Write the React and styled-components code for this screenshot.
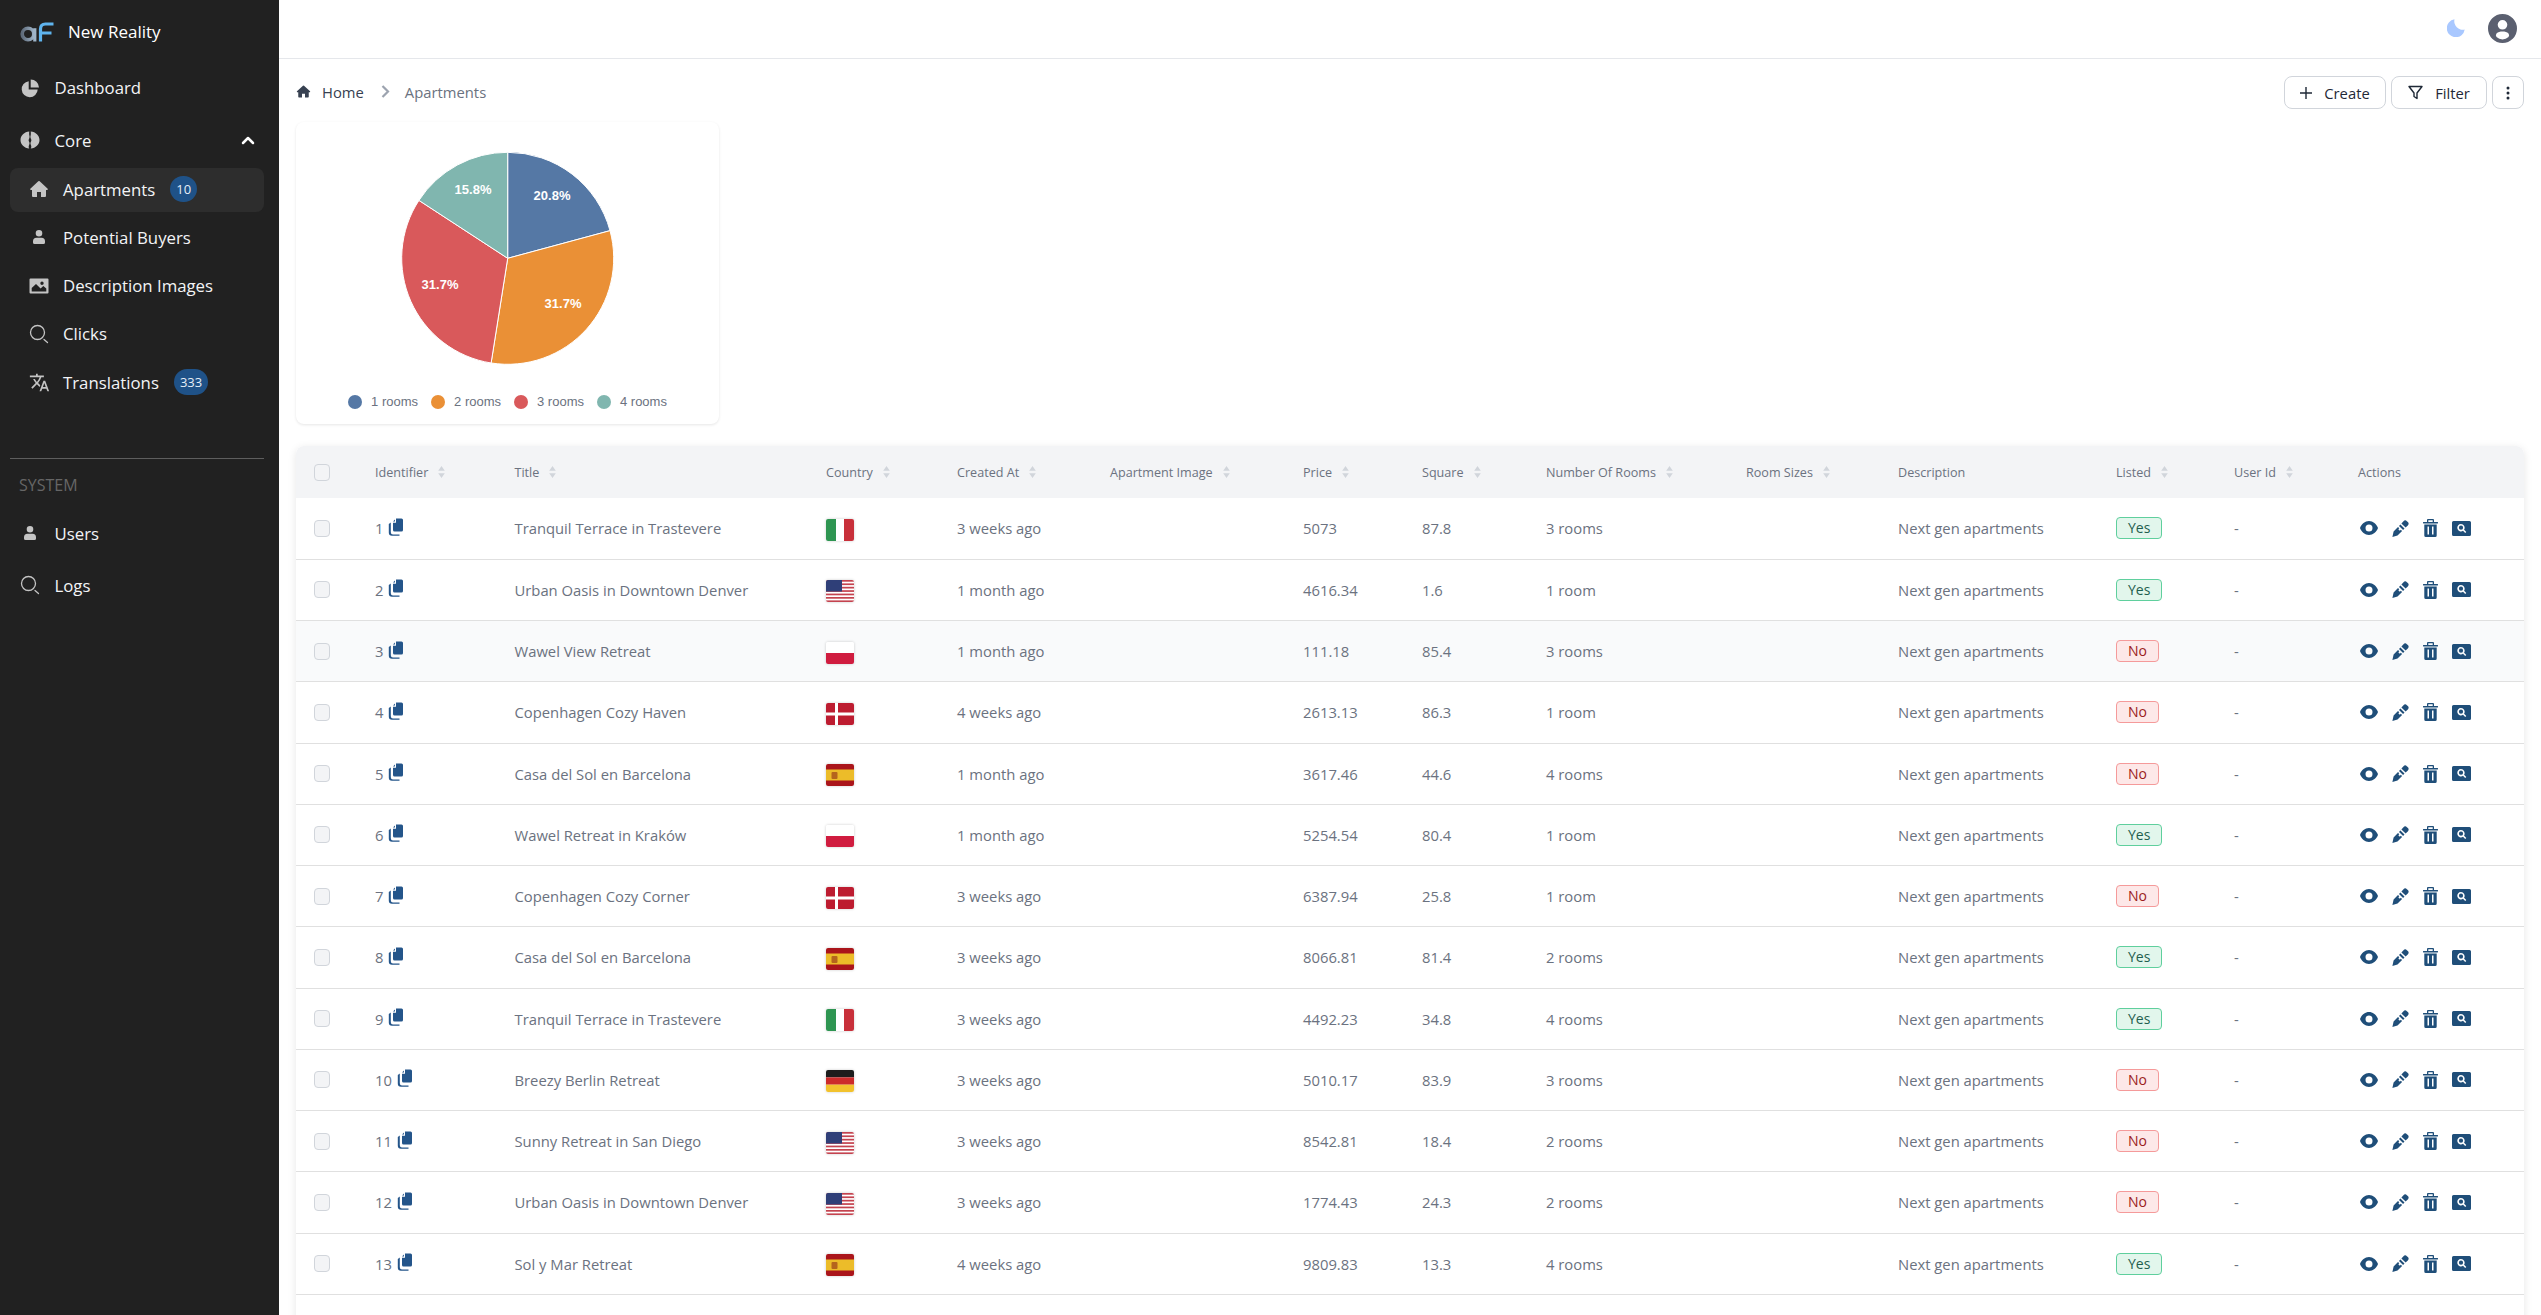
import React from 'react';
import styled, { createGlobalStyle } from 'styled-components';
import { MdTranslate } from 'react-icons/md';

const GlobalStyle = createGlobalStyle`
  html, body { margin: 0; height: 100%; overflow: hidden; background: #fff; }
  body { font-family: "Open Sans", "Noto Sans", sans-serif; }
  * { box-sizing: border-box; }
`;

const Page = styled.div`
  display: flex;
  height: 100vh;
  overflow: hidden;
`;

const Sidebar = styled.aside`
  width: 279px;
  flex: none;
  background: #212121;
  color: #f5f5f5;
  padding: 0 15px 0 10px;
`;

const Brand = styled.div`
  height: 63px;
  display: flex;
  align-items: center;
  gap: 14px;
  padding-left: 10px;
  font-size: 17px;
  font-weight: 500;
  color: #fff;
`;

const NavList = styled.nav`
  display: flex;
  flex-direction: column;
`;

const NavItem = styled.div`
  display: flex;
  align-items: center;
  height: ${p => p.$h || 44}px;
  padding: 0 0 ${p => (p.$sub ? 2 : 0)}px ${p => (p.$sub ? 20 : 11)}px;
  gap: ${p => (p.$sub ? 15 : 15.5)}px;
  margin-bottom: ${p => (p.$sub ? 4.3 : 0)}px;
  font-size: 16.8px;
  border-radius: 8px;
  background: ${p => (p.$active ? '#2d2d2d' : 'transparent')};
  color: #f3f4f6;
  svg.nav { width: 20px; height: 20px; margin: 0 -1px; flex: none; color: #c4c4c4; }
  svg.wide { width: 21px; height: 21px; margin: 0 -2px 0 -1px; }
`;

const Chevron = styled.svg`
  width: 14px;
  height: 9px;
  margin-left: auto;
  margin-right: 9px;
`;

const Count = styled.span`
  height: 26px;
  min-width: 27px;
  padding: 0 6px;
  margin-left: 0;
  border-radius: 13px;
  background: #1f5288;
  color: #e5edf7;
  font-size: 13px;
  font-weight: 500;
  display: flex;
  align-items: center;
  justify-content: center;
`;

const Divider = styled.hr`
  border: 0;
  border-top: 1px solid #5e5e5e;
  margin: 49px 0 0;
`;

const SectionTitle = styled.div`
  font-size: 16px;
  color: #666;
  padding: 15px 9px 13px;
  line-height: 22px;
`;

const Main = styled.main`
  flex: 1;
  min-width: 0;
  display: flex;
  flex-direction: column;
`;

const Topbar = styled.header`
  height: 59px;
  flex: none;
  border-bottom: 1px solid #e5e7eb;
  display: flex;
  align-items: center;
  justify-content: flex-end;
  gap: 23px;
  padding: 0 24px 2px 0;
`;

const Content = styled.div`
  padding: 17px 17px 0;
`;

const Crumbs = styled.div`
  height: 33px;
  display: flex;
  align-items: center;
  justify-content: space-between;
`;

const CrumbTrail = styled.div`
  display: flex;
  align-items: center;
  padding-bottom: 2px;
  font-size: 14.8px;
  color: #374151;
`;

const CrumbHome = styled.span`
  display: flex;
  align-items: center;
  gap: 11px;
  margin-right: 17px;
`;

const CrumbCurrent = styled.span`
  margin-left: 15px;
  color: #6b7280;
`;

const Toolbar = styled.div`
  display: flex;
  gap: 5px;
`;

const ToolButton = styled.button`
  height: 33px;
  width: ${p => p.$w}px;
  display: flex;
  align-items: center;
  justify-content: center;
  gap: 12px;
  padding: 0;
  background: #fff;
  border: 1px solid #d1d5db;
  border-radius: 8px;
  color: #1f2937;
  font: 500 14.8px "Open Sans", sans-serif;
`;

const ChartCard = styled.section`
  width: 423px;
  height: 302px;
  margin-top: 13px;
  border-radius: 8px;
  background: #fff;
  box-shadow: 0 1px 3px rgba(0, 0, 0, 0.1);
  display: flex;
  flex-direction: column;
  align-items: center;
`;

const Legend = styled.div`
  display: flex;
  gap: 13px;
  margin-top: 10px;
  font: 13px "Liberation Sans", sans-serif;
  color: #6b7280;
`;

const LegendItem = styled.span`
  display: flex;
  align-items: center;
  gap: 9px;
`;

const LegendDot = styled.i`
  width: 14px;
  height: 14px;
  border-radius: 50%;
  background: ${p => p.$c};
`;

const TableWrap = styled.div`
  margin-top: 22px;
  border-radius: 8px 8px 0 0;
  box-shadow: 0 2px 8px rgba(0, 0, 0, 0.1);
  overflow: hidden;
`;

const Table = styled.table`
  width: 100%;
  table-layout: fixed;
  border-collapse: collapse;
  background: #fff;
`;

const Th = styled.th`
  height: 52px;
  background: #f3f4f6;
  padding: 0 0 0 24px;
  text-align: left;
  font-size: 12.6px;
  font-weight: 400;
  color: #6b7280;
  white-space: nowrap;
`;

const HeadInner = styled.span`
  display: inline-flex;
  align-items: center;
  gap: 10px;
`;

const Td = styled.td`
  padding: 0 0 0 24px;
  font-size: 14.8px;
  color: #6b7280;
  white-space: nowrap;
`;

const Tr = styled.tr`
  height: 61.25px;
  border-bottom: 1px solid #e0e0e0;
  background: ${p => (p.$hover ? '#f9fafb' : '#fff')};
`;

const Check = styled.span`
  display: block;
  width: 16px;
  height: 17px;
  margin-left: -6px;
  border: 1px solid #d1d5db;
  border-radius: 4px;
  background: #f3f4f6;
`;

const IdCell = styled.span`
  display: inline-flex;
  align-items: center;
  gap: 5px;
  svg { width: 15px; height: 18px; color: #24558a; margin-top: -3px; }
`;

const FlagBox = styled.span`
  display: block;
  width: 28px;
  height: 22px;
  margin-top: 3px;
  border-radius: 2px;
  overflow: hidden;
  box-shadow: 0 0 3px rgba(0, 0, 0, 0.2);
  svg { display: block; width: 28px; height: 22px; }
`;

const Pill = styled.span`
  display: inline-block;
  height: 22px;
  line-height: 20px;
  padding: 0 11px;
  border-radius: 4px;
  font-size: 14px;
  border: 1px solid ${p => (p.$yes ? '#5fcf9d' : '#f59a9a')};
  background: ${p => (p.$yes ? '#e2f6ec' : '#fde8e8')};
  color: ${p => (p.$yes ? '#1f5f4f' : '#9b1c1c')};
`;

const Actions = styled.div`
  display: flex;
  align-items: center;
  gap: 14px;
  padding-left: 2px;
  color: #1f4e79;
  svg { height: 18px; flex: none; }
`;

const COLS = [55, 139.5, 311.5, 131, 153, 193, 119, 124, 200, 152, 218, 118, 124, 190];

const HEADS = [
  ['Identifier', 1], ['Title', 1], ['Country', 1], ['Created At', 1], ['Apartment Image', 1],
  ['Price', 1], ['Square', 1], ['Number Of Rooms', 1], ['Room Sizes', 1], ['Description', 0],
  ['Listed', 1], ['User Id', 1], ['Actions', 0],
];

const ROWS = [
  [1, 'Tranquil Terrace in Trastevere', 'it', '3 weeks ago', '5073', '87.8', '3 rooms', true],
  [2, 'Urban Oasis in Downtown Denver', 'us', '1 month ago', '4616.34', '1.6', '1 room', true],
  [3, 'Wawel View Retreat', 'pl', '1 month ago', '111.18', '85.4', '3 rooms', false],
  [4, 'Copenhagen Cozy Haven', 'dk', '4 weeks ago', '2613.13', '86.3', '1 room', false],
  [5, 'Casa del Sol en Barcelona', 'es', '1 month ago', '3617.46', '44.6', '4 rooms', false],
  [6, 'Wawel Retreat in Kraków', 'pl', '1 month ago', '5254.54', '80.4', '1 room', true],
  [7, 'Copenhagen Cozy Corner', 'dk', '3 weeks ago', '6387.94', '25.8', '1 room', false],
  [8, 'Casa del Sol en Barcelona', 'es', '3 weeks ago', '8066.81', '81.4', '2 rooms', true],
  [9, 'Tranquil Terrace in Trastevere', 'it', '3 weeks ago', '4492.23', '34.8', '4 rooms', true],
  [10, 'Breezy Berlin Retreat', 'de', '3 weeks ago', '5010.17', '83.9', '3 rooms', false],
  [11, 'Sunny Retreat in San Diego', 'us', '3 weeks ago', '8542.81', '18.4', '2 rooms', false],
  [12, 'Urban Oasis in Downtown Denver', 'us', '3 weeks ago', '1774.43', '24.3', '2 rooms', false],
  [13, 'Sol y Mar Retreat', 'es', '4 weeks ago', '9809.83', '13.3', '4 rooms', true],
];

const SLICES = [
  { v: 20.8, c: '#5578a5', l: [552, 195] },
  { v: 31.7, c: '#ea9036', l: [563, 303] },
  { v: 31.7, c: '#d9595b', l: [440, 284] },
  { v: 15.8, c: '#80b6af', l: [473, 189] },
];

const Icon = ({ d, vb = '0 0 20 20', ...rest }) => (
  <svg className="nav" viewBox={vb} fill="currentColor" {...rest}><path d={d} /></svg>
);

const HOME = 'M10.7 2.3a1 1 0 0 0-1.4 0l-8 7.4A.8.8 0 0 0 1.900 11H3v6a1 1 0 0 0 1 1h4v-5h4v5h4a1 1 0 0 0 1-1v-6h1.100a.8.8 0 0 0 .6-1.300z';
const USER = 'M10 3a3.300 3.300 0 1 0 0 6.600A3.300 3.300 0 0 0 10 3zM7.500 10.800h5A3.500 3.500 0 0 1 16 14.300v1.200a1.500 1.500 0 0 1-1.500 1.500h-9A1.500 1.500 0 0 1 4 15.500v-1.200a3.500 3.500 0 0 1 3.500-3.500z';
const PIE = 'M8.700 3.200A8 8 0 1 0 17.700 11.500H8.700zM10.700 1.500v8h8.300a8.300 8.300 0 0 0-8.300-8z';
const BRAIN = 'M9.300 1.500C4.300 1.800.5 5.500.5 10s3.800 8.200 8.800 8.500c-.8-1.200-.8-2.400-.2-3.600.6-1.200.6-2.200 0-3.200-.6-1-.6-2 0-3 .6-1.200.6-2.400.2-3.400-.2-.8-.2-2.800 0-3.800zM10.700 1.500c5 .3 8.800 4 8.800 8.500s-3.800 8.200-8.800 8.500c.8-1.200.8-2.400.2-3.600-.6-1.200-.6-2.200 0-3.200.6-1 .6-2 0-3-.6-1.200-.6-2.400-.2-3.400.2-.8.2-2.800 0-3.800z';
const IMAGE = 'M1.500 2.500h17a1 1 0 0 1 1 1v13a1 1 0 0 1-1 1h-17a1 1 0 0 1-1-1v-13a1 1 0 0 1 1-1zM13 5.500a1.700 1.700 0 1 0 0 3.400 1.700 1.700 0 0 0 0-3.400zM2.700 15.500h14.600v-3l-3-2.500-2.700 2.500-4.600-4.500-4.300 4z';

const SearchIcon = () => (
  <svg className="nav" viewBox="0 0 20 20" fill="none" stroke="currentColor" strokeWidth="1.300" strokeLinecap="round">
    <circle cx="8.500" cy="8.500" r="7" />
    <path d="M15 15.500l3.500 3" />
  </svg>
);

const Logo = () => (
  <svg width="34" height="20" viewBox="0 0 34 20" fill="none">
    <defs>
      <linearGradient id="logoA" x1="0" x2="1"><stop offset="0" stopColor="#5f6b7a" /><stop offset="1" stopColor="#9fb4c8" /></linearGradient>
    </defs>
    <circle cx="8" cy="12" r="5.800" stroke="url(#logoA)" strokeWidth="3.600" />
    <path d="M14.800 6.200V19.500" stroke="#9fb4c8" strokeWidth="3.200" />
    <path d="M20.500 19.500V7Q20.500 2 25.500 2H33.500M20.500 11H31.500" stroke="#5fb4ee" strokeWidth="3.200" />
  </svg>
);

const SortIcon = () => (
  <svg width="7" height="12" viewBox="0 0 7 12" fill="#d1d5db">
    <path d="M3.500 0L6.800 4.800H.2zM3.500 12L.2 7.200h6.600z" />
  </svg>
);

const Flag = ({ code }) => {
  let art = null;
  if (code === 'it') {
    art = (<><rect width="10" height="22" fill="#2e9551" /><rect x="10" width="8" height="22" fill="#fff" /><rect x="18" width="10" height="22" fill="#c8303a" /></>);
  } else if (code === 'pl') {
    art = (<><rect width="28" height="11" fill="#fff" /><rect y="11" width="28" height="11" fill="#d01c3f" /></>);
  } else if (code === 'dk') {
    art = (<><rect width="28" height="22" fill="#bd1c30" /><rect x="9" width="3" height="22" fill="#fff" /><rect y="9.500" width="28" height="3" fill="#fff" /></>);
  } else if (code === 'es') {
    art = (<><rect width="28" height="22" fill="#aa151b" /><rect y="5.500" width="28" height="11" fill="#ecbc29" /><rect x="5.500" y="8" width="6" height="7" rx="1" fill="#b5651d" /></>);
  } else if (code === 'de') {
    art = (<><rect width="28" height="7.400" fill="#1c1c1c" /><rect y="7.400" width="28" height="7.300" fill="#cc2b2b" /><rect y="14.700" width="28" height="7.300" fill="#f2c22d" /></>);
  } else if (code === 'us') {
    art = (<>
      <rect width="28" height="22" fill="#fff" />
      {[0, 1, 2, 3, 4, 5, 6].map(i => <rect key={i} y={i * 3.400} width="28" height="1.700" fill="#c4434f" />)}
      <rect width="16" height="11.500" fill="#2f3f78" />
    </>);
  }
  return <FlagBox><svg viewBox="0 0 28 22">{art}</svg></FlagBox>;
};

const CopyIcon = () => (
  <svg viewBox="0 0 15 18" fill="currentColor">
    <path d="M7 1.600L5 3.600h2zM8 .5h5.500A1.500 1.500 0 0 1 15 2v10a1.500 1.500 0 0 1-1.500 1.500h-7A1.500 1.500 0 0 1 5 12V4.700h3z" />
    <path d="M2.800 4.500v9.800A2.200 2.200 0 0 0 5 16.500h6.500v1.200H4A3.200 3.200 0 0 1 .8 14.500V6z" />
  </svg>
);

const EyeIcon = () => (
  <svg viewBox="0 0 18 14" style={{ width: 18, height: 14 }} fill="currentColor" fillRule="evenodd">
    <path d="M9 0c4 0 7.500 3 9 7-1.500 4-5 7-9 7S1.500 11 0 7c1.500-4 5-7 9-7zm0 3.500a3.500 3.500 0 1 0 0 7 3.500 3.500 0 0 0 0-7z" />
  </svg>
);

const PenIcon = () => (
  <svg viewBox="0 0 17 17" style={{ width: 17, height: 17 }} fill="currentColor">
    <path d="M11.500 1.200a2.400 2.400 0 0 1 3.400 0l.9.9a2.400 2.400 0 0 1 0 3.400L13.600 7.600 9.400 3.400zM8.400 4.500l4.100 4.100-1.400 1.400-4.100-4.100zM6 6.900l1.300 1.300-1 1 1.500 1.500 1-1 1.300 1.300L5.500 15.600.4 17l1.200-5.600z" />
  </svg>
);

const TrashIcon = () => (
  <svg viewBox="0 0 15 18" style={{ width: 15, height: 18 }} fill="currentColor" fillRule="evenodd">
    <path d="M5 0h5a1 1 0 0 1 1 1v2h3.500a.7.700 0 0 1 0 1.500H.5A.7.700 0 0 1 .5 3H4V1a1 1 0 0 1 1-1zm.3 1.300V3h4.400V1.300zM1.300 5.500h12.400V16.500A1.500 1.500 0 0 1 12.200 18H2.800a1.500 1.500 0 0 1-1.500-1.500zM4.500 7.500v8h1.500v-8zm4.500 0v8h1.500v-8z" />
  </svg>
);

const FindIcon = () => (
  <svg viewBox="0 0 19 15" style={{ width: 19, height: 15 }} fill="currentColor" fillRule="evenodd">
    <path d="M1.500 0h16A1.500 1.500 0 0 1 19 1.500v12a1.500 1.500 0 0 1-1.500 1.500h-16A1.500 1.500 0 0 1 0 13.500v-12A1.500 1.500 0 0 1 1.500 0zM9 3a3.700 3.700 0 1 0 2 6.800l2.200 2.200 1.100-1.100-2.200-2.200A3.700 3.700 0 0 0 9 3zm0 1.600a2.100 2.100 0 1 1 0 4.200 2.100 2.100 0 0 1 0-4.200z" />
  </svg>
);

const polar = (a, r) => [507.7 - 296 + r * Math.sin(a), 258.3 - 122 + -r * Math.cos(a)];

const Pie = () => {
  let acc = 0;
  const total = SLICES.reduce((s, x) => s + x.v, 0);
  return (
    <svg width="423" height="262" viewBox="0 0 423 262">
      {SLICES.map(s => {
        const a0 = (acc / total) * Math.PI * 2;
        acc += s.v;
        const a1 = (acc / total) * Math.PI * 2;
        const [x0, y0] = polar(a0, 106);
        const [x1, y1] = polar(a1, 106);
        const big = a1 - a0 > Math.PI ? 1 : 0;
        return (
          <path key={s.c} fill={s.c} stroke="#fff" strokeWidth="1"
            d={`M${polar(0, 0).join(' ')}L${x0} ${y0}A106 106 0 ${big} 1 ${x1} ${y1}Z`} />
        );
      })}
      {SLICES.map(s => (
        <text key={s.c} x={s.l[0] - 296} y={s.l[1] - 122 + 4.500} textAnchor="middle" fill="#fff"
          fontFamily="Liberation Sans, sans-serif" fontSize="13" fontWeight="700">{s.v}%</text>
      ))}
    </svg>
  );
};

export default function App() {
  return (
    <Page>
      <GlobalStyle />
      <Sidebar>
        <Brand><Logo /><span>New Reality</span></Brand>
        <NavList>
          <NavItem $h={49.5}><Icon d={PIE} /><span>Dashboard</span></NavItem>
          <NavItem $h={55.500}>
            <Icon d={BRAIN} /><span>Core</span>
            <Chevron viewBox="0 0 14 9" fill="none" stroke="#fff" strokeWidth="2.500" strokeLinecap="round" strokeLinejoin="round">
              <path d="M2 7l5-5 5 5" />
            </Chevron>
          </NavItem>
          <NavItem $sub $active><Icon d={HOME} /><span>Apartments</span><Count>10</Count></NavItem>
          <NavItem $sub><Icon d={USER} /><span>Potential Buyers</span></NavItem>
          <NavItem $sub><Icon d={IMAGE} /><span>Description Images</span></NavItem>
          <NavItem $sub><SearchIcon /><span>Clicks</span></NavItem>
          <NavItem $sub><MdTranslate className="nav wide" /><span>Translations</span><Count>333</Count></NavItem>
        </NavList>
        <Divider />
        <SectionTitle>SYSTEM</SectionTitle>
        <NavList>
          <NavItem $h={48}><Icon d={USER} /><span>Users</span></NavItem>
          <NavItem $h={56}><SearchIcon /><span>Logs</span></NavItem>
        </NavList>
      </Sidebar>
      <Main>
        <Topbar>
          <svg width="18" height="18" viewBox="0 0 18 18" fill="#a9c8ff">
            <path d="M7.500 0.300A8.500 8.500 0 0 0 17.700 10.500 9 9 0 1 1 7.500 0.300z" />
          </svg>
          <svg width="29" height="29" viewBox="0 0 29 29" fill="#5b6070" fillRule="evenodd">
            <path d="M14.500 0a14.500 14.500 0 1 1 0 29 14.500 14.500 0 0 1 0-29zm0 6a4.800 4.800 0 1 0 0 9.600 4.800 4.800 0 0 0 0-9.600zM8.500 19.500a3 3 0 0 0 0 3.500A9.500 9.500 0 0 0 14.500 25.500 9.500 9.500 0 0 0 20.500 23a3 3 0 0 0 0-3.500c-1.500-1.500-3.500-2-6-2s-4.500.5-6 2z" />
          </svg>
        </Topbar>
        <Content>
          <Crumbs>
            <CrumbTrail>
              <CrumbHome>
                <svg width="15" height="15" viewBox="0 0 20 20" fill="#374151"><path d={HOME} /></svg>
                <span>Home</span>
              </CrumbHome>
              <svg width="9" height="13" viewBox="0 0 9 13" fill="none" stroke="#9ca3af" strokeWidth="2.200"><path d="M1.500 1l5.500 5.500-5.500 5.500" /></svg>
              <CrumbCurrent>Apartments</CrumbCurrent>
            </CrumbTrail>
            <Toolbar>
              <ToolButton $w={102}>
                <svg width="12" height="12" viewBox="0 0 12 12" stroke="#1f2937" strokeWidth="1.400"><path d="M6 0v12M0 6h12" /></svg>
                Create
              </ToolButton>
              <ToolButton $w={96}>
                <svg width="15" height="15" viewBox="0 0 15 15" fill="none" stroke="#1f2937" strokeWidth="1.400" strokeLinejoin="round">
                  <path d="M1 1.500h13L9 8v5.500L6 11.500V8z" />
                </svg>
                Filter
              </ToolButton>
              <ToolButton $w={32}>
                <svg width="4" height="14" viewBox="0 0 4 14" fill="#1f2937">
                  <circle cx="2" cy="2" r="1.500" /><circle cx="2" cy="7" r="1.500" /><circle cx="2" cy="12" r="1.500" />
                </svg>
              </ToolButton>
            </Toolbar>
          </Crumbs>
          <ChartCard>
            <Pie />
            <Legend>
              {SLICES.map((s, i) => (
                <LegendItem key={s.c}><LegendDot $c={s.c} />{i + 1} rooms</LegendItem>
              ))}
            </Legend>
          </ChartCard>
          <TableWrap>
            <Table>
              <colgroup>{COLS.map((w, i) => <col key={i} style={{ width: w }} />)}</colgroup>
              <thead>
                <tr>
                  <Th><Check /></Th>
                  {HEADS.map(([name, sort]) => (
                    <Th key={name}><HeadInner>{name}{sort ? <SortIcon /> : null}</HeadInner></Th>
                  ))}
                </tr>
              </thead>
              <tbody>
                {ROWS.map(r => (
                  <Tr key={r[0]} $hover={r[0] === 3}>
                    <Td><Check /></Td>
                    <Td><IdCell>{r[0]}<CopyIcon /></IdCell></Td>
                    <Td>{r[1]}</Td>
                    <Td><Flag code={r[2]} /></Td>
                    <Td>{r[3]}</Td>
                    <Td />
                    <Td>{r[4]}</Td>
                    <Td>{r[5]}</Td>
                    <Td>{r[6]}</Td>
                    <Td />
                    <Td>Next gen apartments</Td>
                    <Td><Pill $yes={r[7]}>{r[7] ? 'Yes' : 'No'}</Pill></Td>
                    <Td>-</Td>
                    <Td>
                      <Actions><EyeIcon /><PenIcon /><TrashIcon /><FindIcon /></Actions>
                    </Td>
                  </Tr>
                ))}
                <Tr><Td colSpan={14} /></Tr>
              </tbody>
            </Table>
          </TableWrap>
        </Content>
      </Main>
    </Page>
  );
}
